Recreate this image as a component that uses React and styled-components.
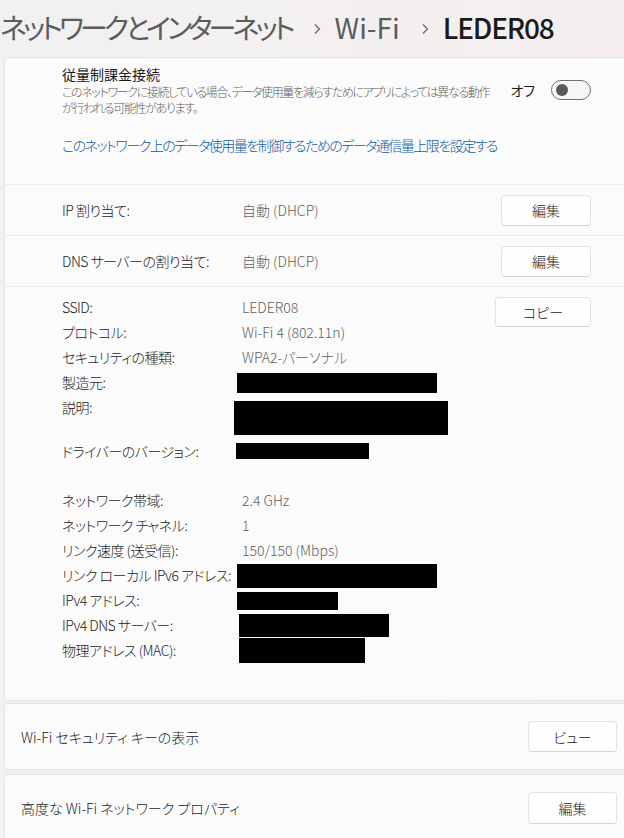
import React from "react";
import styled, { createGlobalStyle } from "styled-components";

const GlobalStyle = createGlobalStyle`
  html, body {
    margin: 0;
    padding: 0;
    overflow: hidden;
  }
  body {
    background: linear-gradient(90deg, #f1f1f1 0%, #f3f0f0 45%, #f6eeee 100%);
    font-family: "Noto Sans CJK JP", "Noto Sans", sans-serif;
    font-feature-settings: "palt";
    font-weight: 300;
    color: #1b1b1b;
  }
`;

const Page = styled.div`
  width: 633px;
  height: 838px;
  overflow: hidden;
`;

const Header = styled.header`
  height: 57px;
  box-sizing: border-box;
  padding-bottom: 4px;
  display: flex;
  align-items: center;
  white-space: nowrap;
  font-size: 28px;
`;

const Crumb = styled.span`
  color: ${(p) => (p.$current ? "#1a1a1a" : "#5c5c5c")};
  font-weight: ${(p) => (p.$current ? 500 : 400)};
  letter-spacing: ${(p) => (p.$tight ? "-3.8px" : p.$current ? "-1.2px" : "0")};
`;

const Chevron = styled.svg`
  width: 8px;
  height: 12px;
  margin: 4px 14px 0 21px;
  flex: none;
`;

const Card = styled.section`
  margin-left: 4px;
  margin-top: ${(p) => p.$top || 0}px;
  border: 1px solid #e6e3e3;
  border-radius: 4px;
  background: #fbfbfb;
`;

const Metered = styled.div`
  padding: 6px 41px 29px 57px;
  border-bottom: 1px solid #efebeb;
`;

const MeteredTop = styled.div`
  display: flex;
  align-items: center;
  gap: 20px;
`;

const TextBlock = styled.div`
  flex: 1;
  white-space: nowrap;
`;

const Title = styled.div`
  font-size: 14px;
  line-height: 20px;
  font-weight: 400;
`;

const Description = styled.div`
  font-size: 12px;
  line-height: 16px;
  letter-spacing: -1.35px;
  color: #5f5f5f;
`;

const ToggleGroup = styled.div`
  display: flex;
  align-items: center;
  gap: 16px;
  font-size: 14px;
  font-weight: 400;
`;

const Toggle = styled.div`
  width: 40px;
  height: 20px;
  box-sizing: border-box;
  border: 1px solid #707070;
  border-radius: 10px;
  background: #f6f6f6;
  display: flex;
  align-items: center;
  padding-left: 4px;

  &::before {
    content: "";
    width: 12px;
    height: 12px;
    border-radius: 50%;
    background: #5a5a5a;
  }
`;

const Link = styled.div`
  margin-top: 19px;
  font-size: 14px;
  line-height: 20px;
  letter-spacing: -1.5px;
  color: #0c5aa8;
  white-space: nowrap;
`;

const SettingRow = styled.div`
  height: 50px;
  padding: 0 41px 0 57px;
  display: grid;
  grid-template-columns: 180px 1fr auto;
  align-items: center;
  border-bottom: 1px solid #efebeb;
  font-size: 14px;
`;

const RowLabel = styled.span`
  white-space: nowrap;
  letter-spacing: -0.5px;
`;

const Value = styled.span`
  color: #5f5f5f;
  font-size: 14px;
`;

const Button = styled.button`
  width: ${(p) => p.$w}px;
  height: ${(p) => p.$h || 32}px;
  margin-top: ${(p) => p.$top || 0}px;
  flex: none;
  background: #fefefe;
  border: 1px solid #e4e4e4;
  border-bottom-color: #d2d2d2;
  border-radius: 4px;
  font-family: inherit;
  font-feature-settings: "palt";
  font-weight: 300;
  font-size: 14px;
  color: #1b1b1b;
  padding: 0;
`;

const Details = styled.div`
  padding: 8px 41px 37px 57px;
  display: flex;
  align-items: flex-start;
`;

const DetailGrid = styled.div`
  flex: 1;
  display: grid;
  grid-template-columns: 180px 1fr;
  font-size: 14px;
  line-height: 25px;
`;

const Label = styled.div`
  height: ${(p) => p.$h || 25}px;
  white-space: nowrap;
  letter-spacing: -0.5px;
`;

const Cell = styled.div`
  height: ${(p) => p.$h || 25}px;
  color: #5f5f5f;
  display: flex;
  align-items: ${(p) => (p.$top ? "flex-start" : "center")};
`;

const Redacted = styled.div`
  width: ${(p) => p.$w}px;
  height: ${(p) => p.$h}px;
  margin-left: ${(p) => p.$x}px;
  margin-top: ${(p) => p.$y || 0}px;
  background: #000;
`;

const Gap = styled.div`
  grid-column: 1 / -1;
  height: 24px;
`;

const SimpleRow = styled.div`
  height: 65px;
  padding: 0 15px 0 16px;
  display: flex;
  align-items: center;
  justify-content: space-between;
  font-size: 14px;
`;

const infoTop = [
  { label: "SSID:", value: "LEDER08" },
  { label: "プロトコル:", value: "Wi-Fi 4 (802.11n)" },
  { label: "セキュリティの種類:", value: "WPA2-パーソナル" },
  { label: "製造元:", box: { w: 200, h: 20, x: -5 } },
  { label: "説明:", h: 44, box: { w: 214, h: 34, x: -8, y: 6 }, top: true },
  { label: "ドライバーのバージョン:", box: { w: 133, h: 16, x: -6, y: -2 } },
];

const infoBottom = [
  { label: "ネットワーク帯域:", value: "2.4 GHz" },
  { label: "ネットワーク チャネル:", value: "1" },
  { label: "リンク速度 (送受信):", value: "150/150 (Mbps)" },
  { label: "リンク ローカル IPv6 アドレス:", box: { w: 200, h: 24, x: -5 } },
  { label: "IPv4 アドレス:", box: { w: 101, h: 18, x: -5 } },
  { label: "IPv4 DNS サーバー:", box: { w: 150, h: 23, x: -3 } },
  { label: "物理アドレス (MAC):", box: { w: 126, h: 25, x: -3 } },
];

const InfoRows = ({ rows }) =>
  rows.map((r) => (
    <React.Fragment key={r.label}>
      <Label $h={r.h}>{r.label}</Label>
      <Cell $h={r.h} $top={r.top}>
        {r.box ? (
          <Redacted $w={r.box.w} $h={r.box.h} $x={r.box.x} $y={r.box.y} />
        ) : (
          r.value
        )}
      </Cell>
    </React.Fragment>
  ));

const Arrow = () => (
  <Chevron viewBox="0 0 8 12">
    <polyline points="2,1.5 6.5,6 2,10.5" fill="none" stroke="#6b6b6b" strokeWidth="1.3" />
  </Chevron>
);

export default function App() {
  return (
    <>
      <GlobalStyle />
      <Page>
        <Header>
          <Crumb $tight>ネットワークとインターネット</Crumb>
          <Arrow />
          <Crumb>Wi-Fi</Crumb>
          <Arrow />
          <Crumb $current>LEDER08</Crumb>
        </Header>

        <Card>
          <Metered>
            <MeteredTop>
              <TextBlock>
                <Title>従量制課金接続</Title>
                <Description>
                  このネットワークに接続している場合、データ使用量を減らすためにアプリによっては異なる動作
                  <br />
                  が行われる可能性があります。
                </Description>
              </TextBlock>
              <ToggleGroup>
                オフ
                <Toggle />
              </ToggleGroup>
            </MeteredTop>
            <Link>このネットワーク上のデータ使用量を制御するためのデータ通信量上限を設定する</Link>
          </Metered>

          <SettingRow>
            <RowLabel>IP 割り当て:</RowLabel>
            <Value>自動 (DHCP)</Value>
            <Button $w={90} $h={31}>編集</Button>
          </SettingRow>
          <SettingRow>
            <RowLabel>DNS サーバーの割り当て:</RowLabel>
            <Value>自動 (DHCP)</Value>
            <Button $w={90} $h={31}>編集</Button>
          </SettingRow>

          <Details>
            <DetailGrid>
              <InfoRows rows={infoTop} />
              <Gap />
              <InfoRows rows={infoBottom} />
            </DetailGrid>
            <Button $w={96} $h={30} $top={2}>コピー</Button>
          </Details>
        </Card>

        <Card $top={2}>
          <SimpleRow>
            <span>Wi-Fi セキュリティ キーの表示</span>
            <Button $w={89} $h={31}>ビュー</Button>
          </SimpleRow>
        </Card>

        <Card $top={4}>
          <SimpleRow>
            <span>高度な Wi-Fi ネットワーク プロパティ</span>
            <Button $w={89} $h={32}>編集</Button>
          </SimpleRow>
        </Card>
      </Page>
    </>
  );
}
